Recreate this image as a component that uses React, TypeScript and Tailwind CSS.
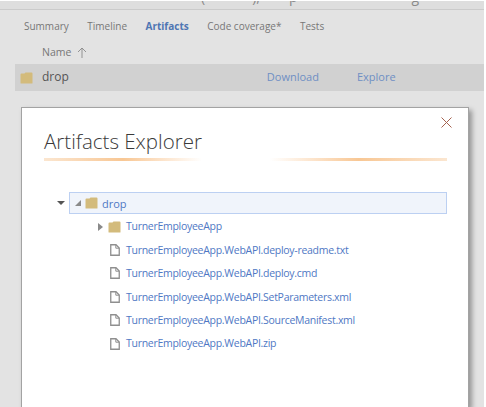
import React from "react";

const font = { fontFamily: '"Open Sans", "Noto Sans", sans-serif' };

function Folder({ className = "" }: { className?: string }) {
  return (
    <svg width="13" height="12" viewBox="0 0 13 12" className={className}>
      <path d="M0.5 2.5 Q0.5 1.5 1.5 1.5 H4.5 L5.5 0.5 H11.5 Q12.5 0.5 12.5 1.5 V11 Q12.5 11.5 12 11.5 H1 Q0.5 11.5 0.5 11 Z" fill="#d3bb7c" />
    </svg>
  );
}

function FileIcon() {
  return (
    <svg width="10" height="12" viewBox="0 0 10 12" className="shrink-0">
      <path d="M0.75 0.75 H6 L9.25 4 V11.25 H0.75 Z" fill="#fff" stroke="#8f8f8f" strokeWidth="1.3" />
      <path d="M5.8 0.9 V4.2 H9" fill="none" stroke="#8f8f8f" strokeWidth="1" />
    </svg>
  );
}

const files = [
  "TurnerEmployeeApp.WebAPI.deploy-readme.txt",
  "TurnerEmployeeApp.WebAPI.deploy.cmd",
  "TurnerEmployeeApp.WebAPI.SetParameters.xml",
  "TurnerEmployeeApp.WebAPI.SourceManifest.xml",
  "TurnerEmployeeApp.WebAPI.zip",
];

export default function App() {
  return (
    <div style={font} className="w-[486px] h-[407px] overflow-hidden bg-white">
      <div className="w-[484px] h-[406px] mt-px bg-[#e3e3e3] overflow-hidden flex flex-col">
        <div className="h-[9px] bg-[#dedede] border-b border-[#cbcbcb] shrink-0 overflow-hidden flex items-start text-[14px] leading-[14px] text-[#8a8a8a]">
          <span className="-mt-[11px] ml-[201px]">(</span>
          <span className="-mt-[11px] ml-[47px]">),</span>
          <span className="-mt-[11px] ml-[29px]">p</span>
          <span className="-mt-[11px] ml-[114px]">g</span>
        </div>
        <div className="flex gap-[18.5px] pl-6 mt-[9px] h-[13px] items-center text-[10px] text-[#777] leading-none">
          <span>Summary</span>
          <span>Timeline</span>
          <span className="font-bold text-[#4f76b3]">Artifacts</span>
          <span>Code coverage*</span>
          <span>Tests</span>
        </div>
        <div className="flex items-center gap-[6px] pl-[42px] mt-[13px] h-[14px] text-[10.5px] text-[#777] leading-none">
          <span>Name</span>
          <svg width="10" height="11" viewBox="0 0 10 11" fill="none" stroke="#8a8a8a" strokeWidth="0.9">
            <path d="M5 11 V1 M1 5 L5 1 L9 5" />
          </svg>
        </div>
        <div className="ml-[15px] mt-[5px] h-[27px] shrink-0 bg-[#d1d1d1] flex items-center text-[11px] leading-none">
          <Folder className="ml-[5px]" />
          <span className="ml-[9px] -mt-[2px] text-[12px] text-[#555]">drop</span>
          <span className="ml-[198px] -mt-[2px] text-[#6f8fc4]">Download</span>
          <span className="ml-[38px] -mt-[2px] text-[#6f8fc4]">Explore</span>
        </div>
        <div className="relative ml-[21px] mt-4 w-[448px] flex-1 bg-white border border-[#a3a3a3] border-b-0 shadow-[3px_3px_5px_rgba(0,0,0,0.35)]">
          <svg width="11" height="11" viewBox="0 0 11 11" className="absolute right-[16px] top-[9px]" stroke="#a5624f" strokeWidth="1" fill="none">
            <path d="M0.5 0.5 L10.5 10.5 M10.5 0.5 L0.5 10.5" />
          </svg>
          <div className="pl-[22px] pr-[21px] pt-[19px]">
            <div className="text-[20.5px] leading-[28px] font-light text-[#3a3a3a]">Artifacts Explorer</div>
            <div className="flex justify-between mt-[3px] h-[3px]">
              <div className="w-[158px] bg-gradient-to-r from-[#fbe6d0] via-[#f8c794] to-white" />
              <div className="w-[177px] bg-gradient-to-r from-white via-[#f8c794] to-[#fbe6d0]" />
            </div>
          </div>
          <div className="ml-[35px] mt-[31px] flex items-center">
            <svg width="8" height="4" viewBox="0 0 8 4" fill="#555"><path d="M0 0 H8 L4 4 Z" /></svg>
            <div className="ml-[4px] w-[378px] h-[22px] bg-[#f0f4fb] border border-[#bcd0f2] flex items-center text-[11px] text-[#4f78c4] leading-none">
              <svg width="6" height="6" viewBox="0 0 6 6" fill="#8a8a8a" className="ml-[5px]"><path d="M6 0 V6 H0 Z" /></svg>
              <Folder className="ml-[4px]" />
              <span className="ml-[4px]">drop</span>
            </div>
          </div>
          <div className="ml-[76px] mt-[1px] text-[10.5px] text-[#4f78c4] leading-none">
            <div className="flex items-center h-[23.4px]">
              <svg width="5" height="8" viewBox="0 0 5 8" fill="#8a8a8a"><path d="M0 0 L5 4 L0 8 Z" /></svg>
              <Folder className="ml-[5px]" />
              <span className="ml-[5px] tracking-[-0.28px]">TurnerEmployeeApp</span>
            </div>
            {files.map((f) => (
              <div key={f} className="flex items-center h-[23.4px] pl-[12px] gap-[6px]">
                <FileIcon />
                <span className="tracking-[-0.28px]">{f}</span>
              </div>
            ))}
          </div>
        </div>
      </div>
    </div>
  );
}
